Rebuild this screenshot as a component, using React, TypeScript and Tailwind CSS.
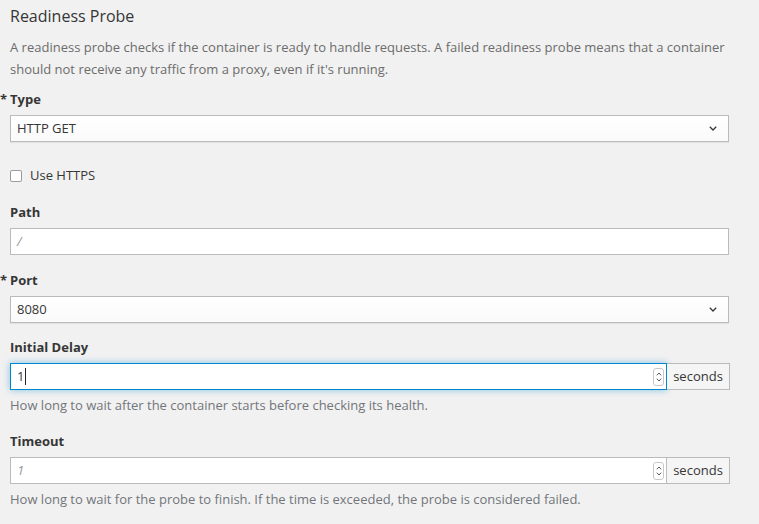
import { useState } from "react";

const FONT = { fontFamily: '"Open Sans", "Liberation Sans", sans-serif' };

function Chevron() {
  return (
    <svg width="8" height="5" viewBox="0 0 8 5" className="text-[#363636]">
      <path d="M0.8 0.8 L4 4 L7.2 0.8" fill="none" stroke="currentColor" strokeWidth="1.3" />
    </svg>
  );
}

function Spinner() {
  return (
    <div className="flex h-[18px] w-[11px] flex-col items-center justify-center gap-[2px] rounded-[3px] border border-[#c8c8c8] bg-white">
      <svg width="6" height="4" viewBox="0 0 6 4">
        <path d="M0.8 3.3 L3 1 L5.2 3.3" fill="none" stroke="#555" strokeWidth="1" />
      </svg>
      <svg width="6" height="4" viewBox="0 0 6 4">
        <path d="M0.8 0.7 L3 3 L5.2 0.7" fill="none" stroke="#555" strokeWidth="1" />
      </svg>
    </div>
  );
}

function Label({ text, required = false }: { text: string; required?: boolean }) {
  return (
    <div className="mb-[5px] text-[13px] font-bold leading-[22px] text-[#363636]">
      {required && <span className="-ml-[10px] inline-block w-[10px]">*</span>}
      {text}
    </div>
  );
}

function SelectBox({ value }: { value: string }) {
  return (
    <div className="flex h-[27px] items-center justify-between border border-[#bbb] bg-gradient-to-b from-white to-[#fafafa] pl-[6px] pr-[11px] text-[13px] text-[#363636] shadow-[0_1px_1px_rgba(0,0,0,0.06)]">
      <span>{value}</span>
      <Chevron />
    </div>
  );
}

function SecondsInput({ value, focused = false }: { value: string; focused?: boolean }) {
  return (
    <div className="flex h-[27px]">
      <div
        className={
          focused
            ? "flex flex-1 items-center justify-between border border-[#0088ce] bg-white pl-[6px] pr-[2px] shadow-[0_0_7px_rgba(0,136,206,0.45)]"
            : "flex flex-1 items-center justify-between border border-[#bbb] bg-white pl-[6px] pr-[2px]"
        }
      >
        {focused ? (
          <span className="flex items-center text-[13px] text-[#363636]">
            {value}
            <span className="ml-[1px] inline-block h-[17px] w-px bg-[#222]" />
          </span>
        ) : (
          <span className="text-[13px] italic text-[#999]">{value}</span>
        )}
        <Spinner />
      </div>
      <div className="flex w-[63px] items-center justify-center border border-l-0 border-[#bbb] bg-[#f5f5f5] text-[13px] text-[#363636]">
        seconds
      </div>
    </div>
  );
}

function Help({ text }: { text: string }) {
  return <div className="mt-[4px] text-[13px] leading-[22px] text-[#72767b]">{text}</div>;
}

export default function App() {
  const [https, setHttps] = useState(false);

  return (
    <div className="min-h-screen bg-[#f1f1f1] pl-[10px] pr-[30px] pt-[6px]" style={FONT}>
      <h2 className="text-[16px] font-normal leading-[20px] text-[#363636]">Readiness Probe</h2>
      <p className="mt-[10px] text-[13px] leading-[22px] text-[#6c6c6c]">
        A readiness probe checks if the container is ready to handle requests. A failed readiness probe means that a container
        should not receive any traffic from a proxy, even if it's running.
      </p>

      <div className="mt-[8px]">
        <Label text="Type" required />
        <SelectBox value="HTTP GET" />
      </div>

      <label className="mt-[23px] flex h-[22px] items-center gap-[8px] text-[13px] text-[#363636]">
        <input
          type="checkbox"
          checked={https}
          onChange={(e) => setHttps(e.target.checked)}
          className="m-0 h-[12px] w-[12px] appearance-none rounded-[2px] border border-[#9a9a9a] bg-white"
        />
        Use HTTPS
      </label>

      <div className="mt-[14px]">
        <Label text="Path" />
        <div className="flex h-[27px] items-center border border-[#bbb] bg-white pl-[6px] text-[13px] italic text-[#999]">
          /
        </div>
      </div>

      <div className="mt-[14px]">
        <Label text="Port" required />
        <SelectBox value="8080" />
      </div>

      <div className="mt-[13px] w-[720px]">
        <Label text="Initial Delay" />
        <SecondsInput value="1" focused />
        <Help text="How long to wait after the container starts before checking its health." />
      </div>

      <div className="mt-[14px] w-[720px]">
        <Label text="Timeout" />
        <SecondsInput value="1" />
        <Help text="How long to wait for the probe to finish. If the time is exceeded, the probe is considered failed." />
      </div>
    </div>
  );
}
